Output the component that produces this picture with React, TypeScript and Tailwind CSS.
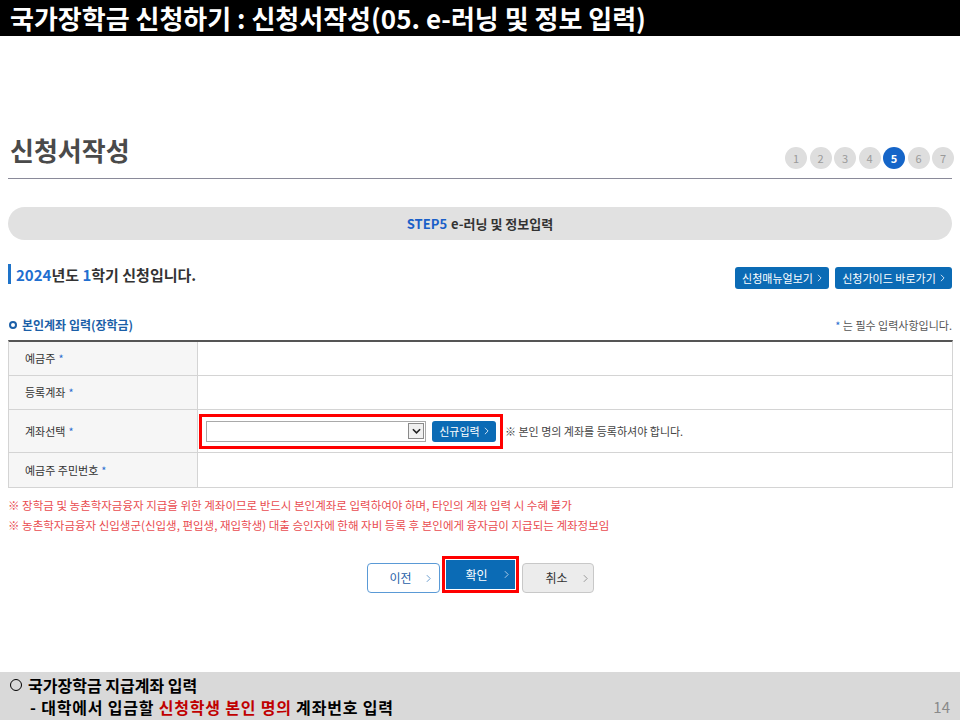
import type { ReactNode } from "react";

const FONT = "font-['Noto_Sans_CJK_KR','Noto_Sans',sans-serif]";

function Chevron({ className }: { className?: string }) {
  return (
    <svg
      viewBox="0 0 6 10"
      className={className}
      fill="none"
      stroke="currentColor"
      strokeWidth="1.2"
    >
      <path d="M1 1l4 4-4 4" />
    </svg>
  );
}

function Req() {
  return <span className="ml-[3px] text-[#2b6fd0]">*</span>;
}

type RowProps = { label: ReactNode; height: string; children?: ReactNode; last?: boolean };

function FormRow({ label, height, children, last }: RowProps) {
  return (
    <div className={`flex ${height} ${last ? "" : "border-b border-[#d4d4d4]"}`}>
      <div className="flex w-[189px] shrink-0 items-center border-r border-[#d4d4d4] bg-[#f6f6f6] pl-[16px] text-[11px] text-[#333]">
        {label}
      </div>
      <div className="flex flex-1 items-center">{children}</div>
    </div>
  );
}

const steps = [1, 2, 3, 4, 5, 6, 7];

export default function App() {
  return (
    <div className={`flex h-[720px] w-[960px] flex-col overflow-hidden bg-white ${FONT}`}>
      <div className="flex h-[36px] items-center bg-black pl-[10px] text-[26px] font-bold leading-none text-white">
        국가장학금 신청하기 : 신청서작성(05. e-러닝 및 정보 입력)
      </div>

      <div className="px-[8px]">
        <div className="mt-[95px] flex items-end justify-between border-b border-[#8a8a99] pb-[10px]">
          <div className="pl-[2px] text-[26px] font-bold leading-[37px] text-[#4a4a4a]">
            신청서작성
          </div>
          <div className="mb-[-1px] mr-[-2px] flex gap-[2.5px]">
            {steps.map((s) => (
              <span
                key={s}
                className={`flex h-[22px] w-[22px] items-center justify-center rounded-full text-[11px] ${
                  s === 5
                    ? "bg-[#1565c8] font-bold text-white"
                    : "bg-[#dedede] text-[#9a9a9a]"
                }`}
              >
                {s}
              </span>
            ))}
          </div>
        </div>

        <div className="mt-[28px] flex h-[33px] items-center justify-center rounded-full bg-[#e1e1e1] text-[13px] font-bold">
          <span className="text-[#1a5fc8]">STEP5</span>
          <span className="ml-[4px] text-[#333]">e-러닝 및 정보입력</span>
        </div>

        <div className="mt-[22px] flex items-start justify-between">
          <div className="flex items-center">
            <span className="h-[20px] w-[3px] bg-[#1e73c9]" />
            <span className="ml-[5px] mt-[2px] text-[15px] font-bold text-[#333]">
              <span className="text-[#1f6fd0]">2024</span>년도{" "}
              <span className="text-[#1f6fd0]">1</span>학기 신청입니다.
            </span>
          </div>
          <div className="mt-[5px] flex gap-[6px]">
            <button className="flex h-[22px] w-[94px] items-center justify-center gap-[4px] rounded-[3px] bg-[#0b6bb5] text-[11px] text-white">
              신청매뉴얼보기
              <Chevron className="h-[8px] w-[5px] text-[#cfe2f3]" />
            </button>
            <button className="flex h-[22px] w-[117px] items-center justify-center gap-[4px] rounded-[3px] bg-[#0b6bb5] text-[11px] text-white">
              신청가이드 바로가기
              <Chevron className="h-[8px] w-[5px] text-[#cfe2f3]" />
            </button>
          </div>
        </div>

        <div className="mt-[27px] flex items-center justify-between">
          <div className="flex items-center">
            <span className="ml-[1px] h-[8px] w-[8px] rounded-full border-[2px] border-[#1b5fa8]" />
            <span className="ml-[5px] text-[12px] font-bold text-[#1b5fa8]">
              본인계좌 입력(장학금)
            </span>
          </div>
          <div className="text-[11px] text-[#555]">
            <span className="text-[#2b6fd0]">*</span> 는 필수 입력사항입니다.
          </div>
        </div>

        <div className="mt-[6px] mr-[-1px] border-x border-b border-t-[2px] border-[#d4d4d4] border-t-[#555]">
          <FormRow label={<>예금주<Req /></>} height="h-[34px]" />
          <FormRow label={<>등록계좌<Req /></>} height="h-[34px]" />
          <FormRow label={<>계좌선택<Req /></>} height="h-[43px]">
            <div className="ml-[1px] flex h-[35px] items-center border-[3px] border-[#ff0000] px-[4px]">
              <div className="flex h-[21px] w-[220px] items-center justify-end border border-[#a9a9a9] bg-white pr-[1px]">
                <span className="flex h-[16px] w-[16px] items-center justify-center border border-[#8a8a8a] bg-[#f0f0f0]">
                  <svg viewBox="0 0 10 6" className="h-[6px] w-[9px]" fill="none" stroke="#222" strokeWidth="1.8">
                    <path d="M1 1l4 4 4-4" />
                  </svg>
                </span>
              </div>
              <button className="ml-[6px] flex h-[21px] w-[64px] items-center justify-center gap-[4px] rounded-[3px] bg-[#0b6bb5] text-[11px] text-white">
                신규입력
                <Chevron className="h-[8px] w-[5px] text-[#cfe2f3]" />
              </button>
            </div>
            <span className="ml-[2px] text-[11px] text-[#444]">
              ※ 본인 명의 계좌를 등록하셔야 합니다.
            </span>
          </FormRow>
          <FormRow label={<>예금주 주민번호<Req /></>} height="h-[34px]" last />
        </div>

        <div className="mt-[7px] text-[11.5px] leading-[20px] text-[#e94b4f]">
          <p>※ 장학금 및 농촌학자금융자 지급을 위한 계좌이므로 반드시 본인계좌로 입력하여야 하며, 타인의 계좌 입력 시 수혜 불가</p>
          <p>※ 농촌학자금융자 신입생군(신입생, 편입생, 재입학생) 대출 승인자에 한해 자비 등록 후 본인에게 융자금이 지급되는 계좌정보임</p>
        </div>

        <div className="mt-[21px] flex items-end justify-center">
          <button className="flex h-[30px] w-[73px] items-center justify-between rounded-[4px] border border-[#5a9ad6] bg-white pl-[22px] pr-[8px] text-[12px] text-[#1f5fa8]">
            이전
            <Chevron className="h-[9px] w-[5px] text-[#6d9fd0]" />
          </button>
          <div className="ml-[2px] border-[3px] border-[#ff0000] p-[1px]">
            <button className="flex h-[29px] w-[69px] items-center justify-between bg-[#0b6bb5] pl-[20px] pr-[6px] text-[12px] text-white">
              확인
              <Chevron className="h-[9px] w-[5px] text-[#a9c9e6]" />
            </button>
          </div>
          <button className="ml-[3px] flex h-[30px] w-[72px] items-center justify-between rounded-[4px] border border-[#c8c8c8] bg-[#ececec] pl-[23px] pr-[5px] text-[12px] text-[#333]">
            취소
            <Chevron className="h-[9px] w-[5px] text-[#999]" />
          </button>
        </div>
      </div>

      <div className="relative mt-auto h-[48px] bg-[#d9d9d9] pl-[10px] pt-[2px] text-[16px] font-bold leading-[22px] text-black">
        <p className="flex items-center">
          <span className="mr-[6px] h-[12px] w-[12px] rounded-full border-[1.5px] border-black" />
          국가장학금 지급계좌 입력
        </p>
        <p className="pl-[20px] tracking-[0.8px]">
          - 대학에서 입금할 <span className="text-[#c00000]">신청학생 본인 명의</span> 계좌번호 입력
        </p>
        <span className="absolute bottom-[2px] right-[10px] text-[15px] font-normal text-[#8a8a8a]">
          14
        </span>
      </div>
    </div>
  );
}
